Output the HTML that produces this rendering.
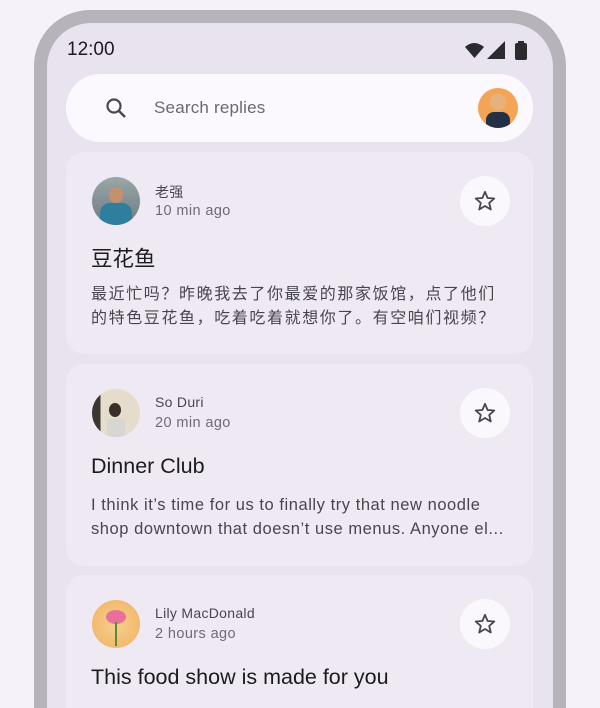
<!DOCTYPE html>
<html style="width:600px;height:708px;overflow:hidden"><head><style>
*{margin:0;padding:0;box-sizing:border-box}
body{width:600px;height:708px;overflow:hidden;background:#f5f2f9;font-family:"Liberation Sans","Noto Sans CJK SC",sans-serif;position:relative}
.frame{position:absolute;left:34px;top:10px;width:532px;height:698px;background:#b6b4ba;border-radius:56px 56px 0 0}
.screen{position:absolute;left:47px;top:23px;width:506px;height:685px;background:#e9e3ef;border-radius:44px 44px 0 0}
.time{position:absolute;left:67px;top:39px;font-size:19px;color:#1c1b1f}
.search{position:absolute;left:66px;top:74px;width:467px;height:68px;background:#fcf9fe;border-radius:34px}
.search .ph{position:absolute;left:88px;top:24px;font-size:17px;color:#6b6870;letter-spacing:0.2px}
.av{position:absolute;border-radius:50%;overflow:hidden}
.card{position:absolute;left:66px;width:467px;height:202px;background:#efe9f3;border-radius:18px}
.name{position:absolute;left:89px;top:30px;font-size:14px;color:#49454e;letter-spacing:0.3px}
.ago{position:absolute;left:89px;top:51px;font-size:14.5px;color:#6f6a75;letter-spacing:0.4px}
.star{position:absolute;left:394px;top:24px;width:50px;height:50px;border-radius:50%;background:#fbf8fd}
.star svg{position:absolute;left:13px;top:13px}
.title{position:absolute;left:25px;top:90px;font-size:21.5px;color:#1c1b1f}
.body{position:absolute;left:25px;top:129px;font-size:16.5px;line-height:24px;color:#49454e;width:440px;white-space:nowrap;letter-spacing:0.55px}
.zh{font-family:"Noto Sans CJK SC",sans-serif;font-size:16px;letter-spacing:1.6px;top:128px}
</style></head><body>
<div class="frame"></div><div class="screen"></div>
<div class="time">12:00</div>
<svg style="position:absolute;left:465px;top:40px" width="64" height="20" viewBox="0 0 64 20">
<path d="M0 7 Q9 -1 19 7 L9.5 18 Z" fill="#2b2a2e"/>
<path d="M22 19 L40 1 L40 19 Z" fill="#2b2a2e"/>
<rect x="50" y="3" width="12" height="17" rx="2" fill="#2b2a2e"/><rect x="53" y="1" width="6" height="3" fill="#2b2a2e"/>
</svg>
<div class="search">
<svg style="position:absolute;left:38px;top:22px" width="24" height="24" viewBox="0 0 24 24"><circle cx="10" cy="10" r="6.5" fill="none" stroke="#4a4650" stroke-width="2.2"/><path d="M15 15 L21 21" stroke="#4a4650" stroke-width="2.4"/></svg>
<div class="ph">Search replies</div>
<div class="av" style="left:412px;top:14px;width:40px;height:40px;background:radial-gradient(circle at 50% 35%,#e8b07a 0 25%,#f3a454 26%);">
<div style="position:absolute;left:8px;top:24px;width:24px;height:16px;background:#243045;border-radius:8px 8px 0 0"></div></div>
</div>

<div class="card" style="top:152px">
<div class="av" style="left:26px;top:25px;width:48px;height:48px;background:linear-gradient(#9aa6a8,#6e7c80)"><div style="position:absolute;left:8px;top:26px;width:32px;height:22px;background:#2f7ea0;border-radius:10px 10px 0 0"></div><div style="position:absolute;left:17px;top:10px;width:14px;height:16px;background:#c49070;border-radius:50%"></div></div>
<div class="name">老强</div><div class="ago">10 min ago</div>
<div class="star"><svg width="24" height="24" viewBox="0 0 24 24"><path d="M12 2.8l2.6 6.2 6.7.5-5.1 4.4 1.6 6.6L12 17l-5.8 3.5 1.6-6.6L2.7 9.5l6.7-.5z" fill="none" stroke="#49454e" stroke-width="1.8" stroke-linejoin="round"/></svg></div>
<div class="title">豆花鱼</div>
<div class="body zh">最近忙吗？昨晚我去了你最爱的那家饭馆，点了他们<br>的特色豆花鱼，吃着吃着就想你了。有空咱们视频？</div>
</div>

<div class="card" style="top:364px">
<div class="av" style="left:26px;top:25px;width:48px;height:48px;background:linear-gradient(90deg,#3a3632 0 18%,#e6dccb 18%)"><div style="position:absolute;left:17px;top:14px;width:12px;height:14px;background:#3a2e28;border-radius:50%"></div><div style="position:absolute;left:15px;top:30px;width:18px;height:18px;background:#d8d6d2"></div></div>
<div class="name">So Duri</div><div class="ago">20 min ago</div>
<div class="star"><svg width="24" height="24" viewBox="0 0 24 24"><path d="M12 2.8l2.6 6.2 6.7.5-5.1 4.4 1.6 6.6L12 17l-5.8 3.5 1.6-6.6L2.7 9.5l6.7-.5z" fill="none" stroke="#49454e" stroke-width="1.8" stroke-linejoin="round"/></svg></div>
<div class="title">Dinner Club</div>
<div class="body">I think it’s time for us to finally try that new noodle<br>shop downtown that doesn’t use menus. Anyone el...</div>
</div>

<div class="card" style="top:575px;height:133px;border-radius:18px 18px 0 0">
<div class="av" style="left:26px;top:25px;width:48px;height:48px;background:radial-gradient(circle,#f7d090,#f0b060)"><div style="position:absolute;left:14px;top:10px;width:20px;height:14px;background:#e8709a;border-radius:50%"></div><div style="position:absolute;left:23px;top:22px;width:2px;height:24px;background:#5a8a3a"></div></div>
<div class="name">Lily MacDonald</div><div class="ago">2 hours ago</div>
<div class="star"><svg width="24" height="24" viewBox="0 0 24 24"><path d="M12 2.8l2.6 6.2 6.7.5-5.1 4.4 1.6 6.6L12 17l-5.8 3.5 1.6-6.6L2.7 9.5l6.7-.5z" fill="none" stroke="#49454e" stroke-width="1.8" stroke-linejoin="round"/></svg></div>
<div class="title">This food show is made for you</div>
</div>
</body></html>
